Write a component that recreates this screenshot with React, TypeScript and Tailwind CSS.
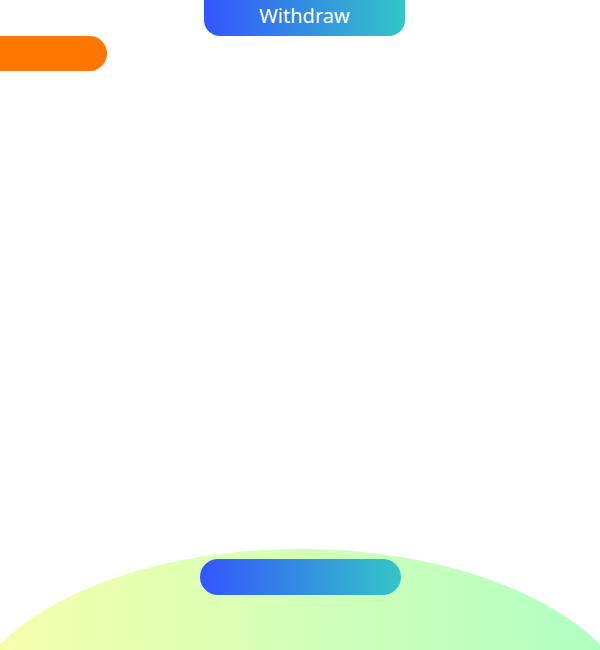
export default function App() {
  return (
    <div className="h-[650px] overflow-hidden bg-white flex flex-col font-['Noto_Sans',sans-serif]">
      <button className="ml-[204px] w-[201px] h-9 shrink-0 rounded-b-2xl bg-linear-to-r/srgb from-[#3355ff] to-[#33c6c6] text-white text-[20px] leading-none pb-1">
        Withdraw
      </button>
      <div className="w-[107px] h-[35px] shrink-0 rounded-r-full bg-[#ff7700]" />
      <div className="self-center mt-[478px] w-[680px] h-[360px] shrink-0 rounded-[50%] bg-linear-to-r/srgb from-[#fbffab] to-[#abffc4] flex justify-center pt-[10px]">
        <button className="w-[201px] h-9 rounded-full bg-linear-to-r/srgb from-[#3355ff] to-[#33c6c6]" />
      </div>
    </div>
  );
}
